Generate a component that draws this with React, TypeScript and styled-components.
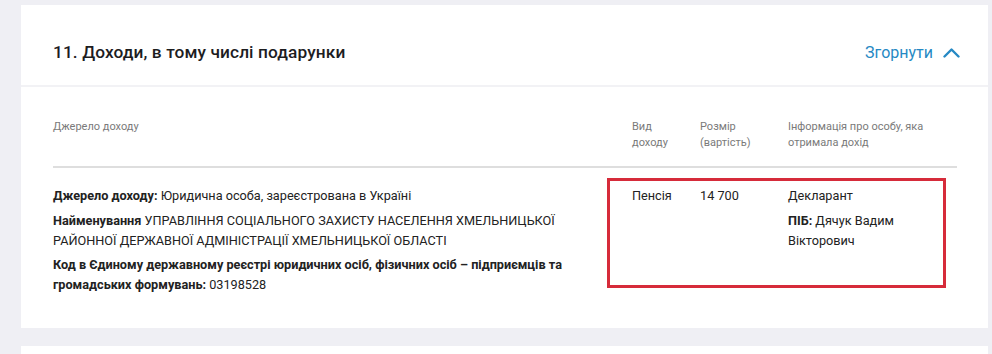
import React from "react";
import styled, { createGlobalStyle } from "styled-components";

const Global = createGlobalStyle`
  html, body { margin: 0; padding: 0; background: #efeff4; }
  body { font-family: Roboto, "Noto Sans", sans-serif; color: #222; }
  * { box-sizing: border-box; }
`;

const Page = styled.div`
  padding: 5px 4px 0 21px;
  display: flex;
  flex-direction: column;
  gap: 18px;
`;

const Card = styled.section<{ $stub?: boolean }>`
  background: #fff;
  width: 967px;
  height: ${(p) => (p.$stub ? "20px" : "auto")};
`;

const CardHeader = styled.header`
  height: 82px;
  display: flex;
  align-items: center;
  justify-content: space-between;
  padding: 14px 28px 0 32px;
  border-bottom: 2px solid #f2f2f5;
`;

const Title = styled.h2`
  margin: 0;
  font-size: 17.3px;
  font-weight: 500;
  color: #1d1d1f;
  letter-spacing: 0.1px;
`;

const Toggle = styled.button`
  border: 0;
  background: none;
  padding: 0;
  display: flex;
  align-items: center;
  gap: 10px;
  font-family: inherit;
  font-size: 16px;
  color: #2689c4;
  cursor: pointer;
`;

const Body = styled.div`
  padding: 32px 31px 33px 32px;
`;

const Grid = styled.div`
  display: grid;
  grid-template-columns: 579px 68px 88px 169px;
`;

const HeadCell = styled.div`
  font-size: 11px;
  line-height: 16px;
  color: #7a7a7a;
  padding: 0 0 15px 0;
  border-bottom: 2px solid #dedede;
`;

const Cell = styled.div<{ $wide?: boolean }>`
  padding: 18px ${(p) => (p.$wide ? "32px" : "0")} 0 0;
  font-size: 12.7px;
  line-height: 20px;
  color: #222;
`;

const Para = styled.p`
  margin: 0 0 4.5px 0;
  &:last-child { margin-bottom: 0; }
`;

const B = styled.b`
  font-weight: 700;
`;

const HighlightWrap = styled.div`
  position: relative;
`;

const Highlight = styled.div`
  position: absolute;
  left: -25px;
  top: 10px;
  width: 339px;
  height: 110px;
  border: 3px solid #d62b3a;
  pointer-events: none;
`;

const Chevron = () => (
  <svg width="17" height="11" viewBox="0 0 17 11" fill="none">
    <path d="M1.5 9.5 L8.5 2.5 L15.5 9.5" stroke="#2689c4" strokeWidth="2.4" strokeLinecap="round" strokeLinejoin="round" />
  </svg>
);

export default function App() {
  return (
    <>
      <Global />
      <Page>
        <Card>
          <CardHeader>
            <Title>11. Доходи, в тому числі подарунки</Title>
            <Toggle>
              Згорнути <Chevron />
            </Toggle>
          </CardHeader>
          <Body>
            <Grid>
              <HeadCell>Джерело доходу</HeadCell>
              <HeadCell>Вид<br />доходу</HeadCell>
              <HeadCell>Розмір<br />(вартість)</HeadCell>
              <HeadCell>Інформація про особу, яка<br />отримала дохід</HeadCell>
              <Cell $wide>
                <Para><B>Джерело доходу:</B> Юридична особа, зареєстрована в Україні</Para>
                <Para><B>Найменування</B> УПРАВЛІННЯ СОЦІАЛЬНОГО ЗАХИСТУ НАСЕЛЕННЯ ХМЕЛЬНИЦЬКОЇ РАЙОННОЇ ДЕРЖАВНОЇ АДМІНІСТРАЦІЇ ХМЕЛЬНИЦЬКОЇ ОБЛАСТІ</Para>
                <Para><B>Код в Єдиному державному реєстрі юридичних осіб, фізичних осіб – підприємців та громадських формувань:</B> 03198528</Para>
              </Cell>
              <HighlightWrap>
                <Highlight />
                <Cell>Пенсія</Cell>
              </HighlightWrap>
              <Cell>14 700</Cell>
              <Cell>
                <Para>Декларант</Para>
                <Para><B>ПІБ:</B> Дячук Вадим<br />Вікторович</Para>
              </Cell>
            </Grid>
          </Body>
        </Card>
        <Card $stub />
      </Page>
    </>
  );
}
